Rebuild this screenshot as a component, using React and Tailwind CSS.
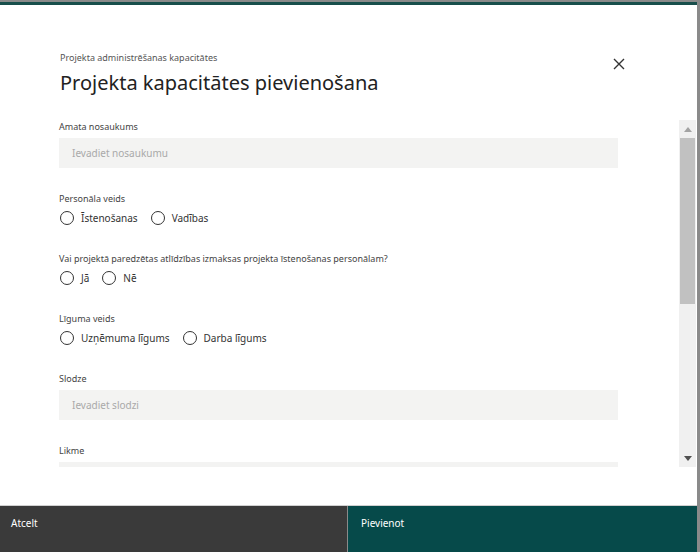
import React from "react";

const font = { fontFamily: '"Noto Sans", "Open Sans", sans-serif' };

function Label({ children }) {
  return <div className="h-[14px] text-[9px] leading-[14px] text-[#444]">{children}</div>;
}

function Input({ placeholder }) {
  return (
    <div className="mt-[4px] h-[30px] w-[559px] bg-[#f3f3f2] pl-[13px] flex items-center text-[10px] text-[#a9a9a9]">
      {placeholder}
    </div>
  );
}

function Radio({ label }) {
  return (
    <div className="flex items-center gap-[7px] mr-[13px]">
      <span className="w-[14px] h-[14px] rounded-full border border-[#333] bg-white" />
      <span className="text-[10px] text-[#333]">{label}</span>
    </div>
  );
}

function RadioRow({ items }) {
  return (
    <div className="h-[20px] mt-[2px] flex items-center pl-[1px]">
      {items.map((i) => (
        <Radio key={i} label={i} />
      ))}
    </div>
  );
}

export default function App() {
  return (
    <div className="w-[700px] h-[552px] flex flex-col bg-white overflow-hidden border-r-[3px] border-[#8a8a8a]" style={font}>
      <div className="h-[2px] bg-[#8a8a8a] shrink-0" />
      <div className="h-[3px] bg-[#174e4b] shrink-0" />
      <div className="relative h-[115px] shrink-0 pl-[60px] pt-[46px]">
        <div className="text-[9px] leading-[14px] text-[#555]">Projekta administrēšanas kapacitātes</div>
        <div className="text-[20px] leading-[30px] text-[#222] mt-[3px]">Projekta kapacitātes pievienošana</div>
        <svg className="absolute left-[613px] top-[53px]" width="12" height="12" viewBox="0 0 12 12">
          <path d="M1 1L11 11M11 1L1 11" stroke="#333" strokeWidth="1.4" />
        </svg>
      </div>
      <div className="h-[347px] shrink-0 flex">
        <div className="w-[679px] overflow-hidden pl-[59px]">
          <div className="flex flex-col">
            <Label>Amata nosaukums</Label>
            <Input placeholder="Ievadiet nosaukumu" />
            <div className="mt-[24px]"><Label>Personāla veids</Label></div>
            <RadioRow items={["Īstenošanas", "Vadības"]} />
            <div className="mt-[24px]"><Label>Vai projektā paredzētas atlīdzības izmaksas projekta īstenošanas personālam?</Label></div>
            <RadioRow items={["Jā", "Nē"]} />
            <div className="mt-[24px]"><Label>Līguma veids</Label></div>
            <RadioRow items={["Uzņēmuma līgums", "Darba līgums"]} />
            <div className="mt-[24px]"><Label>Slodze</Label></div>
            <Input placeholder="Ievadiet slodzi" />
            <div className="mt-[24px]"><Label>Likme</Label></div>
            <Input placeholder="" />
          </div>
        </div>
        <div className="w-[17px] bg-[#f0f0f0] flex flex-col">
          <div className="h-[18px] flex items-center justify-center">
            <svg width="8" height="5" viewBox="0 0 8 5"><path d="M4 0L8 5H0Z" fill="#a3a3a3" /></svg>
          </div>
          <div className="mx-[1px] h-[166px] bg-[#c1c1c1]" />
          <div className="flex-1" />
          <div className="h-[18px] flex items-center justify-center">
            <svg width="8" height="5" viewBox="0 0 8 5"><path d="M0 0H8L4 5Z" fill="#505050" /></svg>
          </div>
        </div>
      </div>
      <div className="flex-1" />
      <div className="h-[47px] shrink-0 flex border-t border-[#d0d0d0]">
        <div className="w-[347px] bg-[#3a3a3a] pl-[11px] pt-[10px] text-[10px] text-white">Atcelt</div>
        <div className="w-[1px] bg-[#8a8a8a]" />
        <div className="flex-1 bg-[#064a4a] pl-[13px] pt-[10px] text-[10px] text-white">Pievienot</div>
      </div>
    </div>
  );
}
